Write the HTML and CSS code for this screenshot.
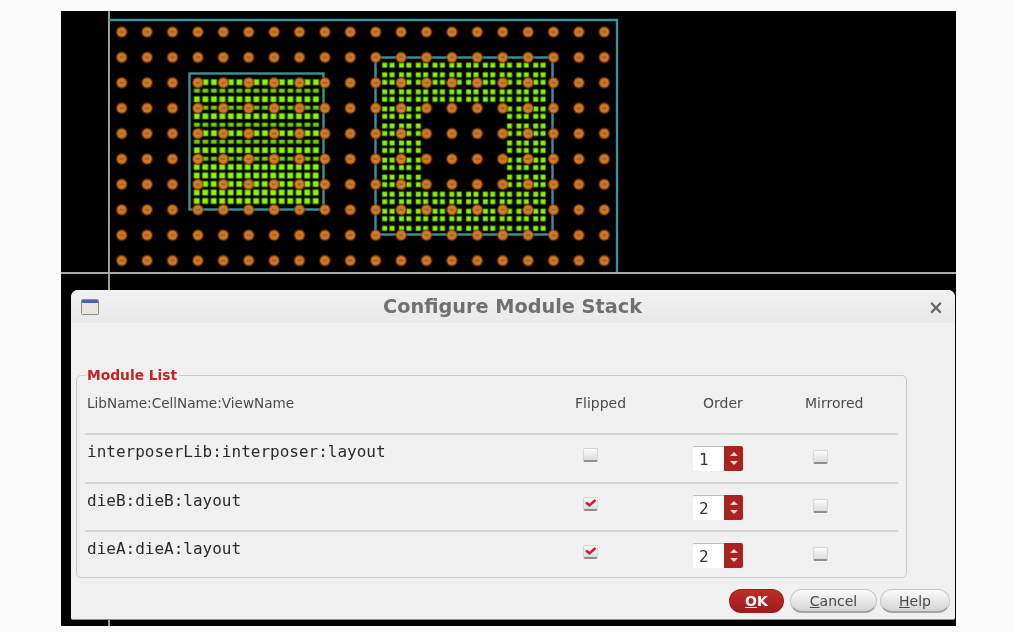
FILE: index.html
```html
<!DOCTYPE html>
<html lang="en">
<head>
    <meta charset="UTF-8">
    <title>Configure Module Stack</title>
    <link rel="stylesheet" href="styles.css">
</head>
<body>
    <div class="screen">
        <div class="ruler"></div>

        <!-- layout view: bump and pad arrays are svg patterns -->
        <svg class="layout" width="895" height="261" viewBox="0 0 895 261">
            <defs>
                <pattern id="bump" x="48" y="8.3" width="25.4" height="25.4" patternUnits="userSpaceOnUse">
                    <circle cx="12.7" cy="12.7" r="6" fill="#6a3406" fill-opacity="0.7"/>
                    <circle cx="12.7" cy="12.7" r="4.7" fill="#f08420" fill-opacity="0.85"/>
                    <rect x="10.6" y="11.9" width="4.2" height="1.5" fill="#6a6a58"/>
                </pattern>
                <pattern id="padA" x="131.5" y="66.8" width="17" height="17" patternUnits="userSpaceOnUse">
                    <rect x="1" y="1" width="6.8" height="6.8" fill="#1f3c00"/>
                    <rect x="1.7" y="1.7" width="5.4" height="5.4" fill="#8cf400"/>
                    <rect x="9.5" y="1" width="6.8" height="6.8" fill="#1f3c00"/>
                    <rect x="10.2" y="1.7" width="5.4" height="5.4" fill="#8cf400"/>
                    <rect x="1" y="10.4" width="6.8" height="5" fill="#1f3c00"/>
                    <rect x="1.7" y="11.1" width="5.4" height="3.6" fill="#74d000"/>
                    <rect x="9.5" y="10.4" width="6.8" height="5" fill="#1f3c00"/>
                    <rect x="10.2" y="11.1" width="5.4" height="3.6" fill="#74d000"/>
                </pattern>
                <pattern id="padA2" x="131.5" y="151.8" width="8.5" height="8.5" patternUnits="userSpaceOnUse">
                    <rect x="0.8" y="0.8" width="6.8" height="6.8" fill="#1f3c00"/>
                    <rect x="1.5" y="1.5" width="5.4" height="5.4" fill="#8cf400"/>
                </pattern>
                <pattern id="padB" x="320.2" y="50.4" width="16.78" height="17.06" patternUnits="userSpaceOnUse">
                    <rect x="0.5" y="0.8" width="6" height="6" fill="#1f3c00"/>
                    <rect x="1.2" y="1.5" width="4.6" height="4.6" fill="#88f000"/>
                    <rect x="7.9" y="0.8" width="6" height="6" fill="#1f3c00"/>
                    <rect x="8.6" y="1.5" width="4.6" height="4.6" fill="#88f000"/>
                    <rect x="0.5" y="10.4" width="6" height="6" fill="#1f3c00"/>
                    <rect x="1.2" y="11.1" width="4.6" height="4.6" fill="#88f000"/>
                    <rect x="7.9" y="10.4" width="6" height="6" fill="#1f3c00"/>
                    <rect x="8.6" y="11.1" width="4.6" height="4.6" fill="#88f000"/>
                </pattern>
            </defs>
            <path d="M48 9H556V261" fill="none" stroke="#3f9098" stroke-width="2.4"/>
            <rect x="128.5" y="62.5" width="134" height="136" fill="none" stroke="#3f9098" stroke-width="2.4"/>
            <rect x="314.5" y="46.5" width="177" height="177" fill="none" stroke="#3f9098" stroke-width="2.4"/>
            <rect x="131.5" y="66.8" width="127.5" height="85" fill="url(#padA)"/>
            <rect x="131.5" y="151.8" width="127.5" height="42.5" fill="url(#padA2)"/>
            <rect x="320.2" y="50.4" width="167.8" height="170.6" fill="url(#padB)"/>
            <rect x="361" y="93" width="84.3" height="84.3" fill="#000"/>
            <rect x="48" y="8.3" width="508" height="254" fill="url(#bump)"/>
        </svg>

        <div class="divider"></div>

        <div class="dialog">
            <div class="titlebar">
                <div class="titlebar-side">
                    <svg class="win-icon" width="18" height="16" viewBox="0 0 18 16">
                        <rect x="0.5" y="0.5" width="17" height="15" rx="1" fill="#e6e6da" stroke="#8c8c8c"/>
                        <rect x="1" y="1" width="16" height="3" fill="#3f68b4"/>
                    </svg>
                </div>
                <h1 class="title">Configure Module Stack</h1>
                <div class="titlebar-side close-side"><span class="close">×</span></div>
            </div>

            <fieldset class="group">
                <legend>Module List</legend>
                <div class="row head">
                    <div class="head-name">LibName:CellName:ViewName</div>
                    <div>Flipped</div>
                    <div>Order</div>
                    <div>Mirrored</div>
                </div>
                <div class="row">
                    <div class="mono">interposerLib:interposer:layout</div>
                    <div><span class="check"></span></div>
                    <div><div class="spin"><span class="spin-val">1</span><span class="spin-btns"><i class="up"></i><i class="down"></i></span></div></div>
                    <div><span class="check low"></span></div>
                </div>
                <div class="row">
                    <div class="mono">dieB:dieB:layout</div>
                    <div><span class="check on"><svg width="13" height="10" viewBox="0 0 13 10"><path d="M2 4.5L5.5 7.5L11.5 2" fill="none" stroke="#c8202a" stroke-width="2.4"/></svg></span></div>
                    <div><div class="spin"><span class="spin-val">2</span><span class="spin-btns"><i class="up"></i><i class="down"></i></span></div></div>
                    <div><span class="check low"></span></div>
                </div>
                <div class="row">
                    <div class="mono">dieA:dieA:layout</div>
                    <div><span class="check on"><svg width="13" height="10" viewBox="0 0 13 10"><path d="M2 4.5L5.5 7.5L11.5 2" fill="none" stroke="#c8202a" stroke-width="2.4"/></svg></span></div>
                    <div><div class="spin"><span class="spin-val">2</span><span class="spin-btns"><i class="up"></i><i class="down"></i></span></div></div>
                    <div><span class="check low"></span></div>
                </div>
            </fieldset>

            <div class="buttons">
                <button class="btn ok"><u>O</u>K</button>
                <button class="btn cancel"><u>C</u>ancel</button>
                <button class="btn help"><u>H</u>elp</button>
            </div>
        </div>
    </div>
</body>
</html>
```

FILE: styles.css
```css
body {
    margin: 0;
    background-color: #fbfbfb;
    font-family: "DejaVu Sans", sans-serif;
    color: #4a4a4a;
}

.screen {
    position: relative;
    width: 895px;
    height: 615px;
    margin: 11px 0 0 61px;
    background-color: #000;
}

.ruler {
    position: absolute;
    left: 47px;
    top: 0;
    bottom: 0;
    width: 2px;
    background-color: #9a9a9a;
}

.layout {
    position: relative;
    display: block;
    filter: blur(0.6px);
}

.divider {
    position: relative;
    height: 2px;
    background-color: #a8a8a8;
}

.dialog {
    position: relative;
    width: 884px;
    height: 330px;
    box-sizing: border-box;
    margin: 16px 0 0 10px;
    background-color: #f0f0f0;
    border-bottom: 1px solid #8a8a8a;
    border-radius: 7px 7px 2px 2px;
    filter: blur(0.5px);
}

.titlebar {
    display: flex;
    align-items: center;
    height: 33px;
    background: linear-gradient(#f1f1f1, #e9e9e9);
    border-radius: 7px 7px 0 0;
}

.titlebar-side {
    flex: 1;
    display: flex;
    padding: 0 10px;
}

.close-side {
    justify-content: flex-end;
    padding-right: 11px;
}

.close {
    font-size: 19px;
    font-weight: bold;
    color: #666;
    line-height: 20px;
}

.title {
    margin: 0;
    font-size: 19.3px;
    font-weight: bold;
    color: #707070;
}

.group {
    width: 831px;
    height: 211px;
    box-sizing: border-box;
    margin: 44px 0 0 5px;
    padding: 0 8px;
    border: 1px solid #c8c8c8;
    border-radius: 5px;
}

.group legend {
    padding: 0 2px;
    font-size: 13.8px;
    font-weight: bold;
    line-height: 16px;
    color: #c62222;
}

.row {
    display: grid;
    grid-template-columns: 490px 118px 112px 1fr;
    height: 48.7px;
    border-top: 2px solid #d6d6d6;
    box-sizing: border-box;
}

.head {
    height: 48px;
    margin-top: 2px;
    border-top: none;
    padding: 9px 0 0 2px;
    grid-template-columns: 488px 128px 102px 1fr;
    font-size: 14px;
    line-height: 18px;
}

.head-name {
    font-size: 13.6px;
}

.mono {
    font-family: "DejaVu Sans Mono", monospace;
    font-size: 16px;
    line-height: 20px;
    padding: 7px 0 0 2px;
    color: #2a2a2a;
}

.check {
    display: block;
    width: 15px;
    height: 14px;
    margin: 13px 0 0 8px;
    box-sizing: border-box;
    background: linear-gradient(#fafafa, #dcdcdc);
    border: 1px solid #d4d4d4;
    border-bottom: 2px solid #8e8e8e;
    border-radius: 2px;
}

.check.low {
    margin: 15px 0 0 8px;
}

.check svg {
    display: block;
}

.spin {
    display: flex;
    width: 50px;
    height: 25px;
    margin-top: 11px;
}

.spin-val {
    flex: 1;
    padding-left: 6px;
    background-color: #fff;
    border-top: 1px solid #bbb;
    border-radius: 2px 0 0 2px;
    font-family: "DejaVu Sans Mono", monospace;
    font-size: 16px;
    line-height: 25px;
    color: #333;
}

.spin-btns {
    width: 19px;
    background-color: #a82420;
    border-radius: 0 2px 2px 0;
    display: flex;
    flex-direction: column;
    align-items: center;
    justify-content: center;
    gap: 5px;
}

.spin-btns i {
    display: block;
    width: 0;
    height: 0;
    border-left: 4px solid transparent;
    border-right: 4px solid transparent;
}

.spin-btns .up {
    border-bottom: 4px solid #eed8d4;
}

.spin-btns .down {
    border-top: 4px solid #eed8d4;
}

.buttons {
    display: flex;
    justify-content: flex-end;
    gap: 3px;
    margin: 11px 5px 0 0;
}

.btn {
    height: 24px;
    padding: 0;
    border: 1px solid #c4c4c4;
    border-bottom: 2px solid #a4a4a4;
    border-radius: 12px;
    background: linear-gradient(#fbfbfb, #d4d4d4);
    font-family: "DejaVu Sans", sans-serif;
    font-size: 14px;
    color: #4a4a4a;
}

.ok {
    width: 55px;
    margin-right: 3px;
    border-color: #a01c1c;
    background: linear-gradient(#bc2e28, #a01c1c);
    color: #fff;
    font-weight: bold;
}

.cancel {
    width: 87px;
}

.help {
    width: 70px;
}
```
